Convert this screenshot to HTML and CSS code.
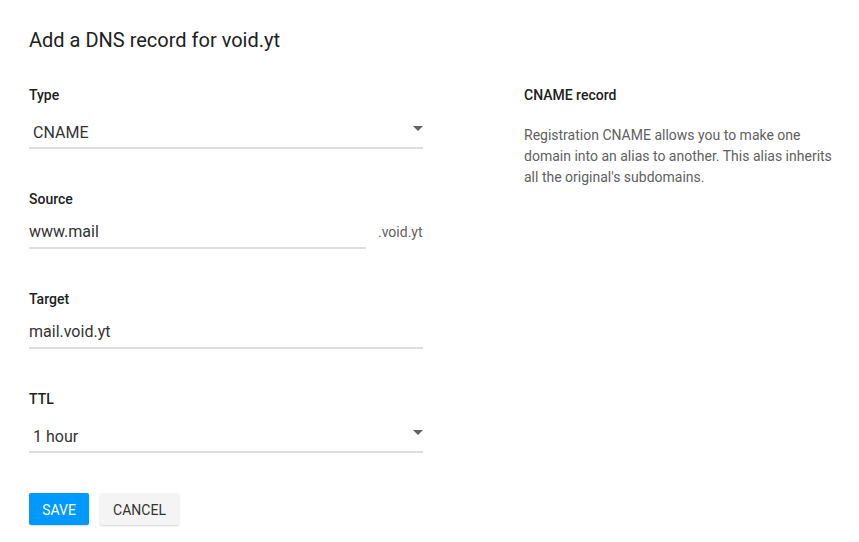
FILE: index.html
```html
<!DOCTYPE html>
<html>
<head>
<meta charset="utf-8">
<link rel="stylesheet" href="styles.css">
</head>
<body>
<div class="page">
  <h1 class="title">Add a DNS record for void.yt</h1>
  <div class="columns">
    <form class="form">
      <div class="field">
        <div class="label">Type</div>
        <div class="select">
          <span class="value">CNAME</span>
          <span class="arrow"></span>
        </div>
      </div>
      <div class="field">
        <div class="label">Source</div>
        <div class="input-row">
          <div class="input short">www.mail</div>
          <span class="suffix">.void.yt</span>
        </div>
      </div>
      <div class="field">
        <div class="label">Target</div>
        <div class="input">mail.void.yt</div>
      </div>
      <div class="field">
        <div class="label">TTL</div>
        <div class="select">
          <span class="value">1 hour</span>
          <span class="arrow"></span>
        </div>
      </div>
      <div class="actions">
        <button type="button" class="btn btn-primary">SAVE</button>
        <button type="button" class="btn btn-default">CANCEL</button>
      </div>
    </form>
    <aside class="aside">
      <div class="label">CNAME record</div>
      <p class="desc">Registration CNAME allows you to make one domain into an alias to another. This alias inherits all the original's subdomains.</p>
    </aside>
  </div>
</div>
</body>
</html>
```
FILE: styles.css
```css
html, body {
  margin: 0;
  padding: 0;
  background: #ffffff;
}
body {
  font-family: Roboto, "Liberation Sans", sans-serif;
  color: #212121;
}
.page {
  padding: 28px 29px;
}
.title {
  margin: 0;
  font-size: 20px;
  line-height: 24px;
  font-weight: 400;
  color: #212121;
}
.columns {
  display: flex;
  margin-top: 35px;
}
.form {
  flex: none;
  width: 394px;
  margin: 0;
}
.aside {
  flex: none;
  margin-left: 101px;
  width: 315px;
}
.label {
  font-size: 14px;
  line-height: 16px;
  font-weight: 500;
  color: #212121;
}
.field + .field {
  margin-top: 42px;
}
.select {
  margin-top: 18px;
  display: flex;
  align-items: center;
  justify-content: space-between;
  padding: 0 0 2px 4px;
  border-bottom: 2px solid #e0e0e0;
  font-size: 16px;
  line-height: 24px;
  color: #333333;
}
.arrow {
  width: 0;
  height: 0;
  border-left: 5px solid transparent;
  border-right: 5px solid transparent;
  border-top: 5px solid #616161;
  margin-top: -10px;
}
.input-row {
  display: flex;
  align-items: baseline;
  margin-top: 13px;
}
.input-row .input {
  margin-top: 0;
}
.input {
  margin-top: 13px;
  padding-bottom: 3px;
  border-bottom: 2px solid #e0e0e0;
  font-size: 16px;
  line-height: 24px;
  color: #333333;
}
.input.short {
  width: 337px;
}
.suffix {
  margin-left: 12px;
  font-size: 14px;
  color: #616161;
}
.actions {
  display: flex;
  gap: 11px;
  margin-top: 40px;
}
.btn {
  font-family: Roboto, "Liberation Sans", sans-serif;
  font-size: 14px;
  height: 32px;
  padding: 2px 0 0;
  border: none;
  border-radius: 2px;
  cursor: pointer;
}
.btn-primary {
  background: #0099ff;
  color: #ffffff;
  width: 60px;
  box-shadow: 0 1px 2px rgba(0, 0, 0, 0.15);
}
.btn-default {
  background: #f4f4f4;
  color: #333333;
  width: 79px;
  box-shadow: 0 1px 2px rgba(0, 0, 0, 0.18);
}
.desc {
  margin: 22px 0 0;
  font-size: 14px;
  line-height: 21px;
  color: #616161;
}
```
